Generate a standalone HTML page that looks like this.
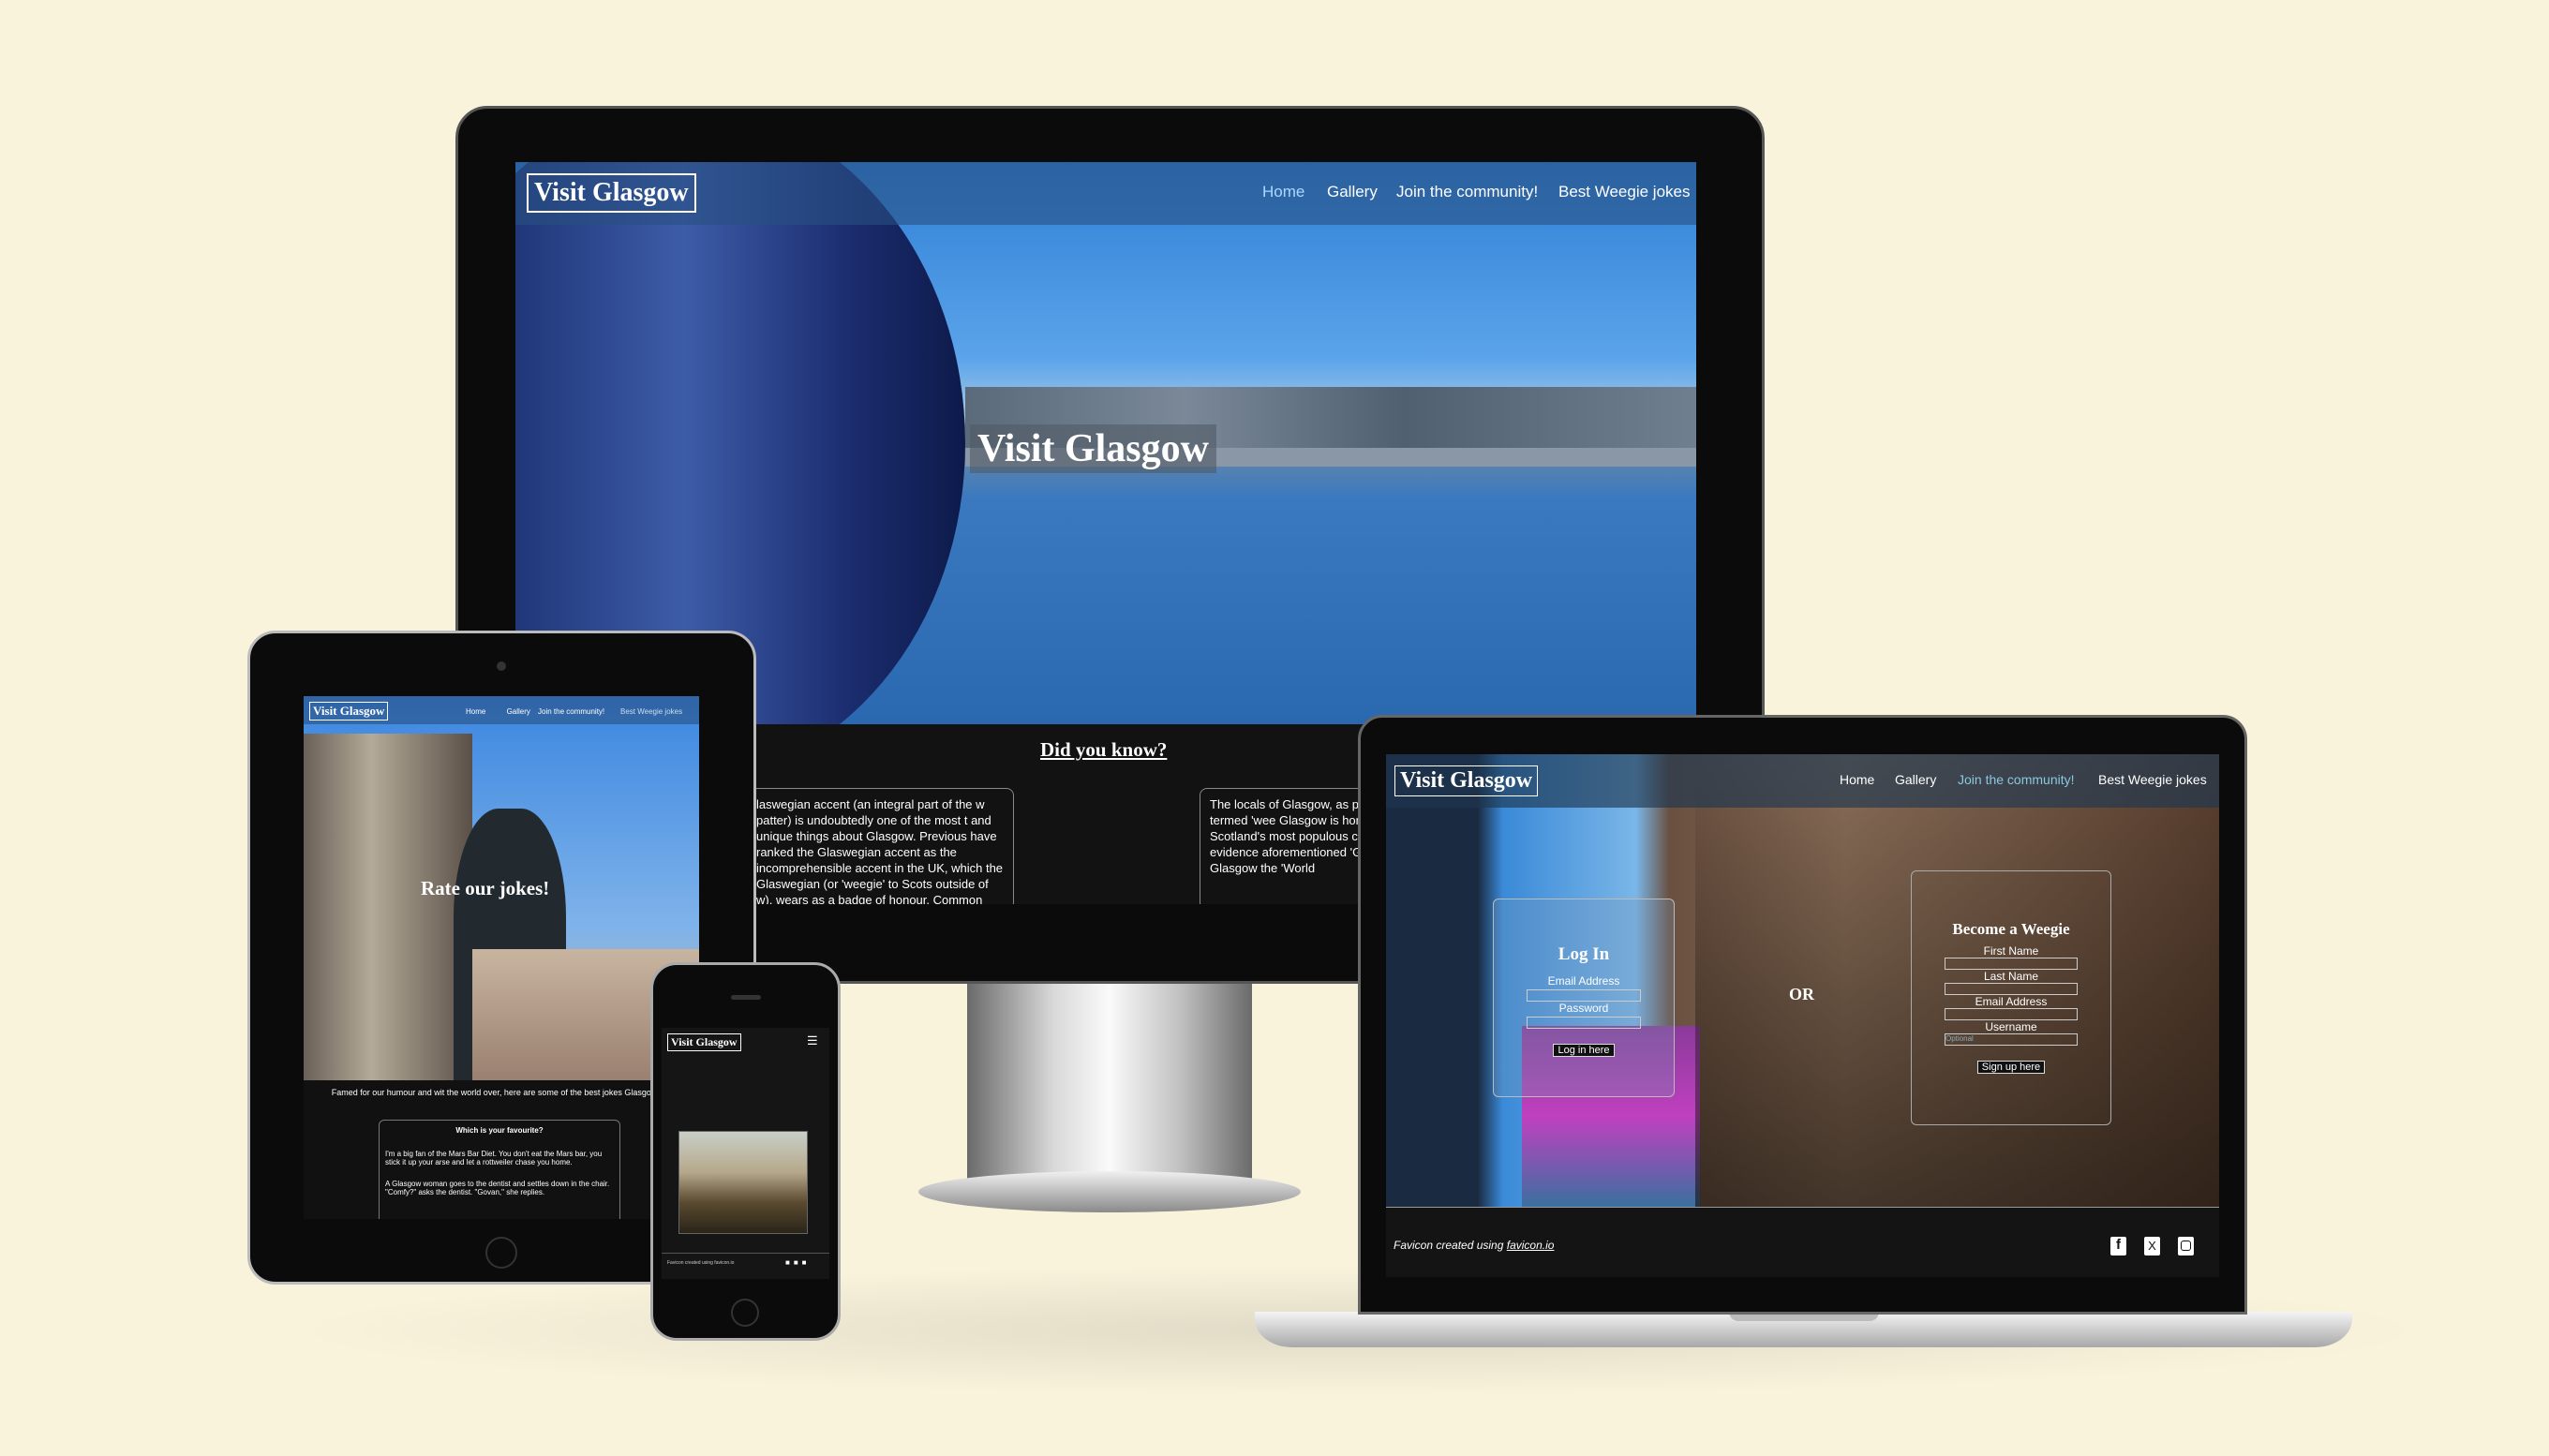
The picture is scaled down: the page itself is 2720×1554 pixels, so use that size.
<!DOCTYPE html>
<html><head><meta charset="utf-8"><style>
*{margin:0;padding:0;box-sizing:border-box}
body{width:2720px;height:1554px;background:#f9f3dc;position:relative;overflow:hidden;font-family:"Liberation Sans",sans-serif}
.a{position:absolute;white-space:nowrap}
.w{white-space:normal}
.serif{font-family:"Liberation Serif",serif;font-weight:bold;color:#fff}
.nav{color:#fff;font-size:17px}
</style></head><body>
<div class="a" style="left:300px;top:1350px;width:2300px;height:140px;background:radial-gradient(ellipse at center,rgba(0,0,0,.1),rgba(0,0,0,0) 70%)"></div>

<!-- MONITOR -->
<div class="a" style="left:1032px;top:1045px;width:304px;height:215px;background:linear-gradient(90deg,#6a6a6a,#d8d8d8 30%,#fafafa 50%,#c0c0c0 75%,#6a6a6a)"></div>
<div class="a" style="left:980px;top:1250px;width:408px;height:44px;border-radius:50%;background:linear-gradient(#f0f0f0,#8a8a8a)"></div>
<div class="a" style="left:486px;top:113px;width:1397px;height:937px;background:#0b0b0b;border-radius:34px;border:3px solid #555"></div>
<div class="a" style="left:550px;top:173px;width:1260px;height:792px;overflow:hidden;background:#111">
  <div class="a" style="left:0;top:0;width:1260px;height:600px;background:linear-gradient(180deg,#2f7fd6 0%,#5ba4ea 35%,#a4c8e6 45%,#6a8aa6 50%,#3a78c0 60%,#2a68b0 100%)"></div>
  <div class="a" style="left:480px;top:240px;width:780px;height:70px;background:linear-gradient(90deg,#5a6a7a,#7a8898 30%,#506070 60%,#707f90)"></div>
  <div class="a" style="left:480px;top:305px;width:780px;height:20px;background:#8a97a6"></div>
  <div class="a" style="left:-120px;top:-60px;width:600px;height:720px;border-radius:50%;background:linear-gradient(90deg,#0d1e5a,#3d5ca8 50%,#1b2c6e 80%,#0d1a4a)"></div>
  <div class="a" style="left:0;top:0;width:1260px;height:67px;background:rgba(40,80,130,.6)"></div>
  <div class="a serif" style="left:12px;top:12px;border:2px solid #fff;padding:3px 6px;font-size:28px">Visit Glasgow</div>
  <div class="a nav" style="left:797px;top:22px;color:#aad8ff">Home</div>
  <div class="a nav" style="left:866px;top:22px">Gallery</div>
  <div class="a nav" style="left:940px;top:22px">Join the community!</div>
  <div class="a nav" style="left:1113px;top:22px">Best Weegie jokes</div>
  <div class="a serif" style="left:485px;top:280px;background:rgba(80,90,100,.6);padding:2px 8px;font-size:42px">Visit Glasgow</div>
  <div class="a" style="left:0;top:600px;width:1260px;height:192px;background:#121212"></div>
  <div class="a serif" style="left:560px;top:615px;font-size:21px;text-decoration:underline">Did you know?</div>
  <div class="a w" style="left:250px;top:668px;width:282px;height:130px;border:1px solid #888;border-radius:8px;color:#fff;font-size:13px;padding:8px 6px;line-height:17px;overflow:hidden">laswegian accent (an integral part of the w patter) is undoubtedly one of the most t and unique things about Glasgow. Previous have ranked the Glaswegian accent as the incomprehensible accent in the UK, which the Glaswegian (or 'weegie' to Scots outside of w), wears as a badge of honour. Common</div>
  <div class="a w" style="left:730px;top:668px;width:282px;height:130px;border:1px solid #888;border-radius:8px;color:#fff;font-size:13px;padding:8px 10px;line-height:17px;overflow:hidden">The locals of Glasgow, as p affectionately termed 'wee Glasgow is home to 600,0 Scotland's most populous charm and wit, as evidence aforementioned 'Glasgow earned Glasgow the 'World</div>
</div>

<!-- TABLET -->
<div class="a" style="left:264px;top:673px;width:543px;height:698px;background:#0b0b0b;border-radius:30px;border:3px solid #bbb"></div>
<div class="a" style="left:530px;top:706px;width:10px;height:10px;border-radius:50%;background:#333"></div>
<div class="a" style="left:518px;top:1320px;width:34px;height:34px;border-radius:50%;border:2px solid #333"></div>
<div class="a" style="left:324px;top:743px;width:422px;height:558px;overflow:hidden;background:#111">
  <div class="a" style="left:0;top:0;width:422px;height:410px;background:linear-gradient(180deg,#3b86e0,#7fb3ea 60%,#c8b9a0)"></div>
  <div class="a" style="left:0;top:40px;width:180px;height:370px;background:linear-gradient(90deg,#6a6058,#b4aa98 40%,#5a5048)"></div>
  <div class="a" style="left:160px;top:120px;width:120px;height:290px;background:#222a30;border-radius:40% 40% 0 0"></div>
  <div class="a" style="left:180px;top:270px;width:242px;height:140px;background:linear-gradient(#c8b5a0,#9a8070)"></div>
  <div class="a" style="left:0;top:0;width:422px;height:30px;background:rgba(40,80,130,.6)"></div>
  <div class="a serif" style="left:6px;top:6px;border:1px solid #fff;padding:1px 3px;font-size:13px">Visit Glasgow</div>
  <div class="a" style="left:173px;top:12px;color:#fff;font-size:8px;word-spacing:20px">Home Gallery</div>
  <div class="a" style="left:250px;top:12px;color:#fff;font-size:8px">Join the community!</div>
  <div class="a" style="left:338px;top:12px;color:#cde;font-size:8px">Best Weegie jokes</div>
  <div class="a serif" style="left:125px;top:193px;font-size:21px">Rate our jokes!</div>
  <div class="a w" style="left:10px;top:418px;width:410px;color:#fff;font-size:9px;text-align:center">Famed for our humour and wit the world over, here are some of the best jokes Glasgow offer:</div>
  <div class="a w" style="left:80px;top:452px;width:258px;height:120px;border:1px solid #777;border-radius:6px;color:#fff;font-size:8px;padding:6px">
    <div style="text-align:center;font-weight:bold">Which is your favourite?</div>
    <div style="margin-top:16px">I'm a big fan of the Mars Bar Diet. You don't eat the Mars bar, you stick it up your arse and let a rottweiler chase you home.</div>
    <div style="margin-top:14px">A Glasgow woman goes to the dentist and settles down in the chair. "Comfy?" asks the dentist. "Govan," she replies.</div>
  </div>
</div>

<!-- PHONE -->
<div class="a" style="left:694px;top:1027px;width:203px;height:404px;background:#0b0b0b;border-radius:28px;border:3px solid #aaa"></div>
<div class="a" style="left:780px;top:1062px;width:32px;height:5px;border-radius:3px;background:#333"></div>
<div class="a" style="left:780px;top:1386px;width:30px;height:30px;border-radius:50%;border:2px solid #333"></div>
<div class="a" style="left:706px;top:1097px;width:179px;height:268px;background:#151515;overflow:hidden">
  <div class="a serif" style="left:6px;top:6px;border:1px solid #fff;padding:1px 3px;font-size:12px">Visit Glasgow</div>
  <div class="a" style="left:155px;top:6px;color:#fff;font-size:13px">☰</div>
  <div class="a" style="left:18px;top:110px;width:138px;height:110px;border:1px solid #666;background:linear-gradient(180deg,#c9cfc8,#b5a88a 40%,#5a4a30 70%,#2a2418)"></div>
  <div class="a" style="left:0;top:240px;width:179px;height:1px;background:#555"></div>
  <div class="a" style="left:6px;top:248px;color:#ccc;font-size:5px">Favicon created using favicon.io</div>
  <div class="a" style="left:132px;top:246px;color:#fff;font-size:8px;letter-spacing:4px">■■■</div>
</div>

<!-- LAPTOP -->
<div class="a" style="left:1339px;top:1400px;width:1171px;height:38px;border-radius:0 0 40px 40px/0 0 30px 30px;background:linear-gradient(#f4f4f4,#a8a8a8)"></div>
<div class="a" style="left:1845px;top:1400px;width:160px;height:10px;border-radius:0 0 10px 10px;background:#bbb"></div>
<div class="a" style="left:1449px;top:763px;width:949px;height:640px;background:#0b0b0b;border-radius:26px 26px 0 0;border:3px solid #666"></div>
<div class="a" style="left:1479px;top:805px;width:889px;height:558px;overflow:hidden;background:#141414">
  <div class="a" style="left:0;top:0;width:889px;height:483px;background:linear-gradient(90deg,#1a2a40 0,#1a2a40 11%,#3a8ad8 14%,#7ab6e8 30%,#6a5040 34%,#8a6e58 55%,#5a4030 100%)"></div>
  <div class="a" style="left:145px;top:290px;width:190px;height:193px;background:linear-gradient(#8a3a9a,#c040c0 50%,#3a70a0)"></div>
  <div class="a" style="left:330px;top:0;width:559px;height:483px;background:linear-gradient(180deg,rgba(0,0,0,0),rgba(20,15,10,.6))"></div>
  <div class="a" style="left:0;top:0;width:889px;height:57px;background:rgba(30,55,80,.65)"></div>
  <div class="a serif" style="left:9px;top:12px;border:1px solid #fff;padding:2px 5px;font-size:24px">Visit Glasgow</div>
  <div class="a" style="left:484px;top:19px;color:#fff;font-size:14px">Home</div>
  <div class="a" style="left:543px;top:19px;color:#fff;font-size:14px">Gallery</div>
  <div class="a" style="left:610px;top:19px;color:#8ac8e0;font-size:14px">Join the community!</div>
  <div class="a" style="left:760px;top:19px;color:#fff;font-size:14px">Best Weegie jokes</div>
  <div class="a" style="left:114px;top:154px;width:194px;height:212px;border:1px solid #bbb;border-radius:6px;background:rgba(120,150,180,.3);color:#fff;text-align:center">
    <div class="serif" style="margin-top:48px;font-size:19px">Log In</div>
    <div style="font-size:12px;margin-top:10px">Email Address</div>
    <div style="margin:2px auto 0;width:122px;height:13px;border:1px solid #ccc"></div>
    <div style="font-size:12px">Password</div>
    <div style="margin:2px auto 0;width:122px;height:13px;border:1px solid #ccc"></div>
    <div style="margin:16px auto 0;width:66px;font-size:11px;background:#111;border:1px solid #ddd">Log in here</div>
  </div>
  <div class="a serif" style="left:430px;top:246px;font-size:18px">OR</div>
  <div class="a" style="left:560px;top:124px;width:214px;height:272px;border:1px solid #aaa;border-radius:6px;color:#fff;text-align:center">
    <div class="serif" style="margin-top:52px;font-size:17px">Become a Weegie</div>
    <div style="font-size:12px;margin-top:6px">First Name</div><div style="margin:0 auto;width:142px;height:13px;border:1px solid #ccc"></div>
    <div style="font-size:12px">Last Name</div><div style="margin:0 auto;width:142px;height:13px;border:1px solid #ccc"></div>
    <div style="font-size:12px">Email Address</div><div style="margin:0 auto;width:142px;height:13px;border:1px solid #ccc"></div>
    <div style="font-size:12px">Username</div><div style="margin:0 auto;width:142px;height:13px;border:1px solid #ccc;font-size:8px;text-align:left;color:#8ab">Optional</div>
    <div style="margin:16px auto 0;width:72px;font-size:11px;background:#111;border:1px solid #ddd">Sign up here</div>
  </div>
  <div class="a" style="left:0;top:483px;width:889px;height:1px;background:#999"></div>
  <div class="a" style="left:8px;top:517px;color:#fff;font-size:12px;font-style:italic">Favicon created using <u>favicon.io</u></div>
  <div class="a" style="left:773px;top:515px;width:17px;height:20px;background:#fff;border-radius:2px;color:#111;font-weight:bold;font-size:15px;text-align:center">f</div>
  <div class="a" style="left:809px;top:515px;width:17px;height:20px;background:#fff;border-radius:2px;color:#111;font-size:13px;text-align:center;line-height:20px">X</div>
  <div class="a" style="left:845px;top:515px;width:17px;height:20px;background:#fff;border-radius:2px"><div style="margin:4px 3px;width:11px;height:11px;border:1.5px solid #111;border-radius:3px"></div></div>
</div>
</body></html>
